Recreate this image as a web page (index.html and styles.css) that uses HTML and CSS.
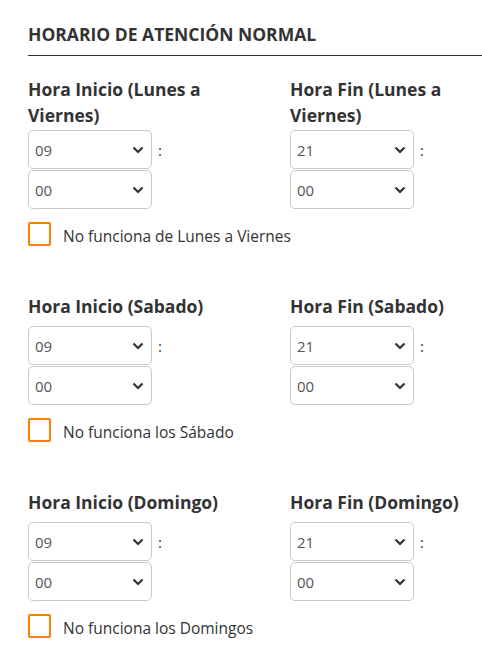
FILE: index.html
```html
<!DOCTYPE html>
<html lang="es">
<head>
<meta charset="utf-8">
<title>Horario</title>
<link rel="stylesheet" href="styles.css">
</head>
<body>
<div class="page">
  <h2 class="title">HORARIO DE ATENCIÓN NORMAL</h2>

  <section class="block first">
    <div class="cols">
      <div class="field">
        <label class="label">Hora Inicio (Lunes a Viernes)</label>
        <div class="time">
          <div class="row"><div class="select"><span>09</span><svg class="chev" viewBox="0 0 12 8"><path d="M1.5 1.5 L6 6 L10.5 1.5" /></svg></div><span class="colon">:</span></div>
          <div class="row"><div class="select"><span>00</span><svg class="chev" viewBox="0 0 12 8"><path d="M1.5 1.5 L6 6 L10.5 1.5" /></svg></div></div>
        </div>
      </div>
      <div class="field">
        <label class="label">Hora Fin (Lunes a Viernes)</label>
        <div class="time">
          <div class="row"><div class="select"><span>21</span><svg class="chev" viewBox="0 0 12 8"><path d="M1.5 1.5 L6 6 L10.5 1.5" /></svg></div><span class="colon">:</span></div>
          <div class="row"><div class="select"><span>00</span><svg class="chev" viewBox="0 0 12 8"><path d="M1.5 1.5 L6 6 L10.5 1.5" /></svg></div></div>
        </div>
      </div>
    </div>
    <div class="check"><span class="box"></span><span class="check-text">No funciona de Lunes a Viernes</span></div>
  </section>

  <section class="block">
    <div class="cols">
      <div class="field">
        <label class="label">Hora Inicio (Sabado)</label>
        <div class="time">
          <div class="row"><div class="select"><span>09</span><svg class="chev" viewBox="0 0 12 8"><path d="M1.5 1.5 L6 6 L10.5 1.5" /></svg></div><span class="colon">:</span></div>
          <div class="row"><div class="select"><span>00</span><svg class="chev" viewBox="0 0 12 8"><path d="M1.5 1.5 L6 6 L10.5 1.5" /></svg></div></div>
        </div>
      </div>
      <div class="field">
        <label class="label">Hora Fin (Sabado)</label>
        <div class="time">
          <div class="row"><div class="select"><span>21</span><svg class="chev" viewBox="0 0 12 8"><path d="M1.5 1.5 L6 6 L10.5 1.5" /></svg></div><span class="colon">:</span></div>
          <div class="row"><div class="select"><span>00</span><svg class="chev" viewBox="0 0 12 8"><path d="M1.5 1.5 L6 6 L10.5 1.5" /></svg></div></div>
        </div>
      </div>
    </div>
    <div class="check"><span class="box"></span><span class="check-text">No funciona los Sábado</span></div>
  </section>

  <section class="block">
    <div class="cols">
      <div class="field">
        <label class="label">Hora Inicio (Domingo)</label>
        <div class="time">
          <div class="row"><div class="select"><span>09</span><svg class="chev" viewBox="0 0 12 8"><path d="M1.5 1.5 L6 6 L10.5 1.5" /></svg></div><span class="colon">:</span></div>
          <div class="row"><div class="select"><span>00</span><svg class="chev" viewBox="0 0 12 8"><path d="M1.5 1.5 L6 6 L10.5 1.5" /></svg></div></div>
        </div>
      </div>
      <div class="field">
        <label class="label">Hora Fin (Domingo)</label>
        <div class="time">
          <div class="row"><div class="select"><span>21</span><svg class="chev" viewBox="0 0 12 8"><path d="M1.5 1.5 L6 6 L10.5 1.5" /></svg></div><span class="colon">:</span></div>
          <div class="row"><div class="select"><span>00</span><svg class="chev" viewBox="0 0 12 8"><path d="M1.5 1.5 L6 6 L10.5 1.5" /></svg></div></div>
        </div>
      </div>
    </div>
    <div class="check"><span class="box"></span><span class="check-text">No funciona los Domingos</span></div>
  </section>
</div>
</body>
</html>
```

FILE: styles.css
```css
html, body {
  margin: 0;
  padding: 0;
  background: #ffffff;
}
body {
  font-family: "Open Sans", "Liberation Sans", sans-serif;
  color: #333333;
  overflow: hidden;
}
.page {
  padding: 20px 0 0 28px;
}
.title {
  margin: 0;
  font-size: 17.5px;
  font-weight: 700;
  line-height: 28px;
  color: #333333;
  padding-bottom: 7px;
  border-bottom: 1px solid #333333;
}
.block {
  padding-top: 47px;
}
.block.first {
  padding-top: 20px;
}
.cols {
  display: grid;
  grid-template-columns: 262px 1fr;
}
.field {
  padding-right: 30px;
}
.field + .field {
  padding-right: 0;
}
.label {
  display: block;
  font-size: 17.5px;
  font-weight: 700;
  line-height: 26px;
  color: #333333;
  margin-bottom: 7px;
}
.first .label {
  margin-bottom: 2px;
}
.time {
  display: flex;
  flex-direction: column;
  gap: 1px;
}
.row {
  display: flex;
  align-items: center;
}
.select {
  box-sizing: border-box;
  width: 124px;
  height: 39px;
  border: 1px solid #c8c8c8;
  border-radius: 5px;
  display: flex;
  align-items: center;
  justify-content: space-between;
  padding: 0 7px 0 6px;
  font-size: 15px;
  color: #555555;
  background: #ffffff;
}
.chev {
  width: 12px;
  height: 8px;
  fill: none;
  stroke: #333333;
  stroke-width: 2.2;
}
.colon {
  margin-left: 6px;
  font-size: 15px;
  color: #333333;
}
.check {
  display: flex;
  align-items: center;
  height: 24px;
  margin-top: 13px;
}
.box {
  box-sizing: border-box;
  width: 23px;
  height: 24px;
  border: 2px solid #ff8000;
  border-radius: 2px;
}
.check-text {
  margin-left: 12px;
  padding-top: 3px;
  line-height: 20px;
  font-size: 15.5px;
  color: #333333;
}
```
